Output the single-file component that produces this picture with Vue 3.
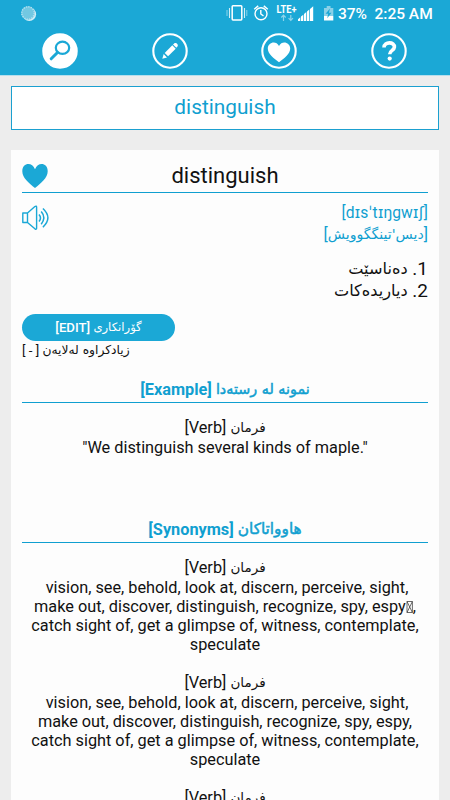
<template>
  <div class="screen">
    <header class="top">
      <div class="status">
        <svg class="spinner" width="18" height="18" viewBox="0 0 18 18">
          <circle cx="9.3" cy="9.3" r="6.8" fill="#fff" opacity=".8" />
          <circle cx="8" cy="8" r="6.8" fill="#72c8e2" />
          <circle cx="8" cy="8" r="6.2" fill="none" stroke="#b8e2f0" stroke-width="1.4" stroke-dasharray="1.2 1.2" />
        </svg>
        <svg class="indicators" width="108" height="24" viewBox="0 0 108 24">
          <g fill="none" stroke="#fff">
            <rect x="6.2" y="5.7" width="9.6" height="14.2" rx=".8" stroke-width="1.5" />
            <path d="M3.5 8v10M18.5 8v10" stroke-width="1.1" opacity=".8" />
            <path d="M1 10v6M20.8 10v6" stroke-width="1" opacity=".5" />
            <circle cx="35" cy="13.8" r="6" stroke-width="1.4" />
            <path d="M34.8 10v4l2.7 1.8M28.2 9.2l4-3.3M37.8 5.9l4 3.3" stroke-width="1.4" />
            <path d="M57.5 21v-5.5M55.3 17.5l2.2-2.3 2.2 2.3M64.8 15v5.5M62.6 18.2l2.2 2.3 2.2-2.3" stroke-width="1.2" opacity=".5" />
          </g>
          <text class="lte" x="50.5" y="13" textLength="20" lengthAdjust="spacingAndGlyphs">LTE+</text>
          <path d="M72 21v-1.8l2.3-1.9V21zM75 21v-4.4l2.3-1.9V21zM78 21v-7l2.3-1.9V21zM81 21v-9.5l2.3-1.9V21zM84 21V9l3.2-2.8V21z" fill="#fff" />
          <path d="M98 8h2.7V6h3.8v2h2.8v8H98z" fill="#8bd1e8" />
          <path d="M98 16h9.3v4.5H98z" fill="#fff" />
          <path d="M104 8.5l-4.4 5.3h2.6l-1 4.5 4.3-5.5h-2.6z" fill="#1ba8d6" />
        </svg>
        <span class="percent">37%</span>
        <span class="clock">2:25 AM</span>
      </div>
      <nav class="tabs">
        <svg v-for="tab in tabs" :key="tab" width="36" height="36" viewBox="0 0 36 36">
          <circle cx="18" cy="18" r="16.7" :fill="tab === 'search' ? '#fff' : 'none'" stroke="#fff" stroke-width="2.1" />
          <g v-if="tab === 'search'" fill="none" stroke="#1ba8d6">
            <ellipse cx="20.5" cy="14.8" rx="6.7" ry="6.1" stroke-width="2.2" />
            <path d="M15.5 19.5l-6.3 6.3" stroke-width="3" stroke-linecap="round" />
          </g>
          <g v-else-if="tab === 'edit'" fill="#fff">
            <path d="M10.3 25.7l1.4-4.8 3.3 3.5z" />
            <path d="M12.7 19.9l7.6-7.6 3.4 3.4-7.6 7.6z" />
            <path d="M21 11.5l1.2-1.1c1.8-1.5 4.7 1.4 3.2 3.2l-1.1 1.2z" />
          </g>
          <path v-else-if="tab === 'favourites'" d="M18 29.3C13 25.7 6.8 21 6.8 15.6c0-6.3 8.2-8.8 11.2-2.6 3-6.2 11.2-3.7 11.2 2.6 0 5.4-6.2 10.1-11.2 13.7z" fill="#fff" />
          <g v-else>
            <path d="M13 14.5c.2-6.2 10.8-6 10.4-.3-.2 3.3-4.7 3.2-4.7 7" fill="none" stroke="#fff" stroke-width="3.6" />
            <circle cx="18.7" cy="25.6" r="2.1" fill="#fff" />
          </g>
        </svg>
      </nav>
    </header>

    <div class="search">distinguish</div>

    <main class="card">
      <div class="word">
        <svg class="heart" width="26" height="24" viewBox="0 0 26 24">
          <path d="M13 24C7 19.4.3 13.8.3 7.3.3-1.5 10.2-2.4 13 5.2 15.8-2.4 25.7-1.5 25.7 7.3 25.7 13.8 19 19.4 13 24z" fill="#1ba8d6" />
        </svg>
        <h1>distinguish</h1>
      </div>

      <div class="sound">
        <svg width="28" height="26" viewBox="0 0 28 26" fill="none" stroke="#1ba8d6" stroke-width="1.4" stroke-linejoin="round">
          <path d="M.8 8h4.7v9.5H.8zM5.5 8l7.4-6.5q1.7-1 1.7.7v21q0 1.7-1.7.6L5.5 17.5" />
          <path d="M17 9.5q3 3.5 0 7M19.2 6.5q5.2 6 0 12.7M20.9 3.5q10 9.3 0 18.7" stroke-width="1.5" />
        </svg>
        <div class="phonetic">
          <div class="ipa">[dɪsˈtɪŋgwɪʃ]</div>
          <div dir="rtl">[<span class="ku">دیس'تینگگوویش</span>]</div>
        </div>
      </div>

      <div class="meanings" dir="rtl">
        <div v-for="(m, i) in meanings" :key="m">{{ i + 1 }}. <span class="ku">{{ m }}</span></div>
      </div>

      <button class="edit">[EDIT] <span class="ku">گۆرانکاری</span></button>
      <div class="added">[ - ] <span class="ku">زیادکراوە لەلایەن</span></div>

      <h2>[Example] <span class="ku">نمونە لە رستەدا</span></h2>
      <div class="entry example">
        <div class="verb">[Verb] <span class="ku">فرمان</span></div>
        <div>"We distinguish several kinds of maple."</div>
      </div>

      <h2>[Synonyms] <span class="ku ku-wide">هاوواتاکان</span></h2>
      <div class="entry" v-for="n in 3" :key="n">
        <div class="verb">[Verb] <span class="ku">فرمان</span></div>
        <div>
          &nbsp;vision, see, behold, look at, discern, perceive, sight,<br />
          make out, discover, distinguish, recognize, spy, espy<svg v-if="n === 1" class="tofu" width="7" height="12" viewBox="0 0 7 12"><path d="M1 .5h5.4v11H1zl5.4 11M6.4.5L1 11.5" fill="none" stroke="#444" stroke-width=".8" /></svg>,<br />
          catch sight of, get a glimpse of, witness, contemplate,<br />
          speculate
        </div>
      </div>
    </main>
  </div>
</template>

<script setup>
const tabs = ['search', 'edit', 'favourites', 'help']

const meanings = ['دەناسێت', 'دیاریدەکات']
</script>

<style>
body {
  margin: 0;
}
</style>

<style scoped>
.screen {
  box-sizing: border-box;
  height: 800px;
  overflow: hidden;
  background: #ededed;
  color: #111;
  font-family: Roboto, "DejaVu Sans", sans-serif;
}
.top {
  height: 76px;
  background: #1ba8d6;
  border-bottom: 1px solid #b7dfed;
  box-sizing: border-box;
}
.status {
  display: flex;
  height: 32px;
  color: #fff;
  font-size: 15.5px;
  font-weight: 500;
  line-height: 29px;
}
.spinner {
  margin: 5px 0 0 20px;
}
.indicators {
  margin-left: 188px;
}
.lte {
  font-size: 10px;
  font-weight: 700;
  fill: #fff;
}
.percent {
  margin-left: 4px;
  width: 36.5px;
}
.clock {
  white-space: nowrap;
}
.tabs {
  display: flex;
  justify-content: space-between;
  padding: 0 43px 0 42px;
}
.tabs svg {
  margin-top: 1px;
}
.search {
  box-sizing: border-box;
  height: 44px;
  margin: 10px 11px 20px;
  border: 1px solid #1ba0d0;
  background: #fff;
  color: #109fd0;
  font-size: 20.8px;
  line-height: 41px;
  text-align: center;
}
.card {
  height: 700px;
  margin: 0 11px;
  padding: 0 11px;
  background: #fdfdfd;
}
.word {
  display: grid;
  grid-template-columns: 26px 1fr 26px;
  box-sizing: border-box;
  height: 43px;
  border-bottom: 1px solid #109fd0;
}
.heart {
  margin-top: 14px;
}
h1 {
  margin: 0;
  font-size: 22px;
  font-weight: 400;
  line-height: 52px;
  text-align: center;
}
.sound {
  display: flex;
  justify-content: space-between;
  height: 65px;
}
.sound svg {
  margin-top: 12px;
}
.phonetic {
  padding-top: 10px;
  color: #109fd0;
  font-size: 16px;
  line-height: 21px;
  text-align: right;
}
.ipa {
  font-size: 15.6px;
}
.meanings {
  height: 56px;
  font-size: 19px;
  line-height: 22px;
}
.meanings .ku {
  font-size: 0.85em;
}
.ku {
  font-family: "DejaVu Sans", sans-serif;
  font-size: 0.88em;
  line-height: 1;
  vertical-align: 1px;
}
.edit {
  display: block;
  width: 153px;
  height: 27px;
  padding: 0;
  border: 0;
  border-radius: 14px;
  background: #1ba8d6;
  color: #fff;
  font: 500 13.2px/28px Roboto, sans-serif;
}
.added {
  height: 35px;
  font-size: 13.2px;
  line-height: 20px;
}
.added .ku {
  font-size: 0.93em;
}
h2 {
  box-sizing: border-box;
  height: 27px;
  margin: 0;
  border-bottom: 1px solid #109fd0;
  color: #109fd0;
  font-size: 16.3px;
  font-weight: 700;
  line-height: 27px;
  text-align: center;
}
h2 .ku {
  font-weight: 400;
  -webkit-text-stroke: 0.5px #109fd0;
}
h2 .ku-wide {
  font-size: 0.94em;
}
.entry {
  height: 115px;
  font-size: 16.3px;
  line-height: 19.2px;
  text-align: center;
  white-space: nowrap;
}
.verb {
  height: 19.5px;
}
.verb .ku {
  font-size: 0.83em;
}
h2 + .entry {
  margin-top: 15px;
}
.entry.example {
  height: 98px;
}
.tofu {
  vertical-align: -1px;
}
</style>
